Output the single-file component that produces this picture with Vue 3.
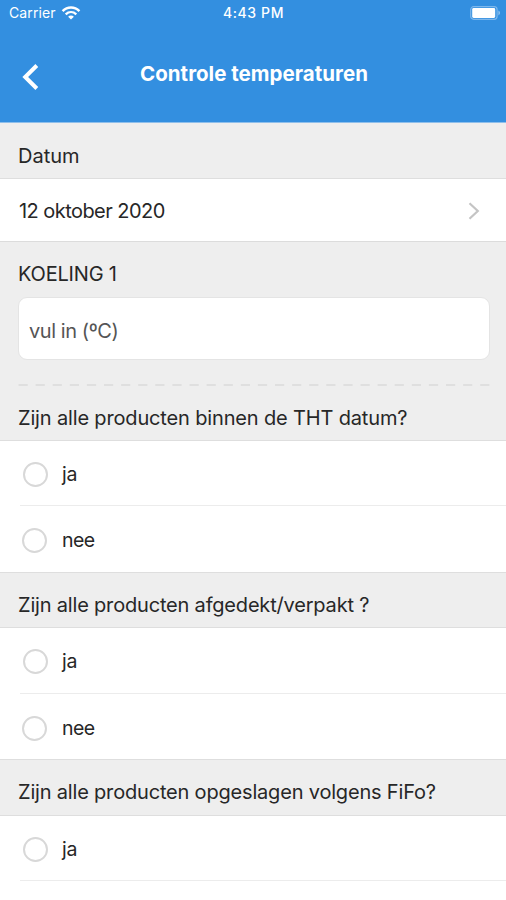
<script setup>
const questions = [
  { id: 'tht', text: 'Zijn alle producten binnen de THT datum?', options: ['ja', 'nee'] },
  { id: 'afgedekt', text: 'Zijn alle producten afgedekt/verpakt ?', options: ['ja', 'nee'] },
  { id: 'fifo', text: 'Zijn alle producten opgeslagen volgens FiFo?', options: ['ja'] },
]
</script>

<template>
  <div class="screen">
    <header class="header">
      <div class="status">
        <div class="carrier">
          <span class="carrier-name">Carrier</span>
          <svg class="wifi" width="20" height="14" viewBox="0 0 20 14" fill="none" stroke="#fff">
            <path d="M1.6 5.1C6.4 .3 13.6 .3 18.4 5.1" stroke-width="2.5" />
            <path d="M4.7 8.3C7.8 5.4 12.2 5.4 15.3 8.3" stroke-width="2.3" />
            <path d="M10 13.5L7.1 10.7C8.7 9.2 11.3 9.2 12.9 10.7Z" fill="#fff" stroke="none" />
          </svg>
        </div>
        <span class="clock">4:43 PM</span>
        <svg class="battery" width="31" height="14" viewBox="0 0 31 14">
          <rect x=".7" y=".7" width="26.4" height="12.6" rx="3" fill="none" stroke="#7db7ec" stroke-width="1.2" />
          <rect x="2.2" y="2.1" width="23" height="9.8" rx="1.4" fill="#fff" />
          <path d="M28.4 4.6C30.6 5.6 30.6 8.4 28.4 9.4Z" fill="#8dc0ee" />
        </svg>
      </div>
      <div class="navbar">
        <svg class="back" width="18" height="28" viewBox="0 0 18 28" fill="none" stroke="#fff" stroke-width="4">
          <path d="M15.8 2.5L4.2 14L15.8 25.5" />
        </svg>
        <h1 class="title">Controle temperaturen</h1>
      </div>
    </header>

    <div class="section-label"><span>Datum</span></div>
    <div class="date-row">
      <span class="date">12 oktober 2020</span>
      <svg class="chevron" width="12" height="18" viewBox="0 0 12 18" fill="none" stroke="#c4c4c4" stroke-width="2.2">
        <path d="M1.5 1.2L9.8 9L1.5 16.8" />
      </svg>
    </div>

    <section class="measure">
      <div class="measure-name">KOELING 1</div>
      <div class="field"><span class="placeholder">vul in (ºC)</span></div>
      <svg class="dashes" width="472" height="2" viewBox="0 0 472 2">
        <path d="M.5 1H472" stroke="#dfdfdf" stroke-width="2" stroke-dasharray="9.2 7.9" />
      </svg>
    </section>

    <section v-for="q in questions" :key="q.id" :class="['question', q.id]">
      <h2 class="question-text"><span>{{ q.text }}</span></h2>
      <div v-for="o in q.options" :key="o" :class="['option', o]">
        <i class="radio"></i>
        <span class="option-text">{{ o }}</span>
      </div>
    </section>
  </div>
</template>

<style>
body {
  margin: 0;
  overflow: hidden;
}
</style>

<style scoped>
.screen {
  width: 506px;
  height: 900px;
  overflow: hidden;
  background: #fff;
  color: #272727;
  font: 400 20px/24px Inter, "Liberation Sans", sans-serif;
  white-space: nowrap;
}
.header {
  height: 123px;
  box-sizing: border-box;
  background: #338fe0;
  border-bottom: 1px solid #8fbfeb;
  color: #fff;
}
.status {
  display: grid;
  grid-template-columns: 1fr auto 1fr;
  align-items: center;
  height: 26px;
  padding: 0 5px 0 9px;
  font-size: 14px;
}
.carrier {
  display: flex;
  align-items: center;
  gap: 5px;
}
.carrier-name {
  letter-spacing: 0.1px;
}
.wifi {
  margin-top: -1px;
}
.clock {
  font-weight: 500;
  font-size: 14px;
  letter-spacing: 0.6px;
  margin-right: 3px;
}
.battery {
  justify-self: end;
}
.navbar {
  display: grid;
  grid-template-columns: 60px 1fr 58px;
  align-items: center;
  height: 96px;
}
.back {
  margin: 5px 0 0 21px;
}
.title {
  margin: 0;
  text-align: center;
  font-size: 20.5px;
  font-weight: 700;
  letter-spacing: 0.02px;
}
.section-label,
.question-text {
  display: flex;
  align-items: center;
  box-sizing: border-box;
  height: 57px;
  margin: 0;
  padding: 9px 18px 0;
  background: #eee;
  border-bottom: 1px solid #dedede;
  font-size: 20px;
  font-weight: 400;
}
.section-label {
  height: 56px;
  padding-top: 11px;
}
.date-row {
  display: flex;
  align-items: center;
  justify-content: space-between;
  height: 62px;
  padding: 0 26px 0 19px;
}
.date {
  margin-top: 2px;
  letter-spacing: -0.55px;
}
.chevron {
  margin-top: 2px;
}
.measure {
  box-sizing: border-box;
  height: 146px;
  padding: 20px 16px 0 18px;
  background: #eee;
  border-top: 1px solid #dcdcdc;
}
.measure-name {
  letter-spacing: -0.2px;
}
.field {
  display: flex;
  align-items: center;
  box-sizing: border-box;
  height: 63px;
  margin-top: 11px;
  padding: 4px 10px 0;
  background: #fff;
  border: 1px solid #e4e4e4;
  border-radius: 9px;
}
.placeholder {
  color: #555;
  letter-spacing: -0.43px;
}
.dashes {
  display: block;
  margin-top: 24px;
}
.question-text {
  border-top: 1px solid #dedede;
  letter-spacing: -0.185px;
}
.tht .question-text {
  height: 54px;
  border-top: 0;
  letter-spacing: -0.155px;
}
.afgedekt .question-text {
  height: 56px;
}
.option {
  display: flex;
  align-items: center;
  box-sizing: border-box;
  margin-left: 20px;
}
.option.ja {
  height: 66px;
  padding: 2px 0 0 3px;
  border-bottom: 1px solid #ececec;
}
.tht .option.ja,
.fifo .option.ja {
  height: 65px;
}
.option.nee {
  height: 65px;
  padding: 3px 0 0 2px;
}
.tht .option.nee {
  height: 66px;
}
.radio {
  box-sizing: border-box;
  width: 25px;
  height: 25px;
  border: 2px solid #d8d8d8;
  border-radius: 50%;
}
.option-text {
  margin: -1px 0 0 15px;
  font-size: 19.5px;
  letter-spacing: -0.6px;
}
.ja .option-text {
  margin-left: 14px;
  letter-spacing: -0.3px;
}
</style>
